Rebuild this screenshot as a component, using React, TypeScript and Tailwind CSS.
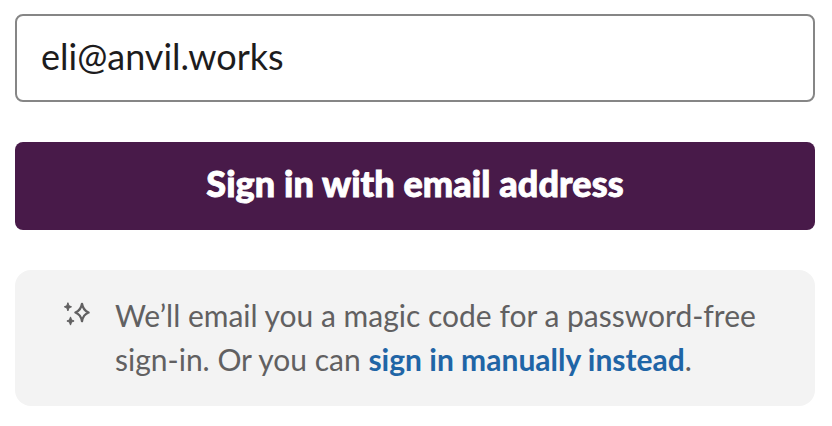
import { useState } from 'react';

function SparkleIcon() {
  return (
    <svg width="28" height="26" viewBox="0 0 28 26" fill="none" aria-hidden="true">
      <path
        d="M19 3.800C19.800 8.200 21.500 11 25.600 12.500C21.500 14 19.800 16.800 19 21.200C18.200 16.800 16.500 14 12.400 12.500C16.500 11 18.200 8.200 19 3.800Z"
        stroke="#616061"
        strokeWidth="2.3"
        strokeLinejoin="round"
      />
      <path d="M4.900 2.700L6 5.700L8.500 6.800L6 7.900L4.900 10.900L3.800 7.900L1.300 6.800L3.800 5.700Z" fill="#616061" stroke="#616061" strokeWidth="1" strokeLinejoin="round" />
      <path d="M7.500 16.900L8.600 19.900L11.100 21L8.600 22.100L7.500 25.100L6.400 22.100L3.900 21L6.400 19.900Z" fill="#616061" stroke="#616061" strokeWidth="1" strokeLinejoin="round" />
    </svg>
  );
}

export default function App() {
  const [email, setEmail] = useState('eli@anvil.works');

  return (
    <main className="h-[426px] w-[832px] bg-white px-[15px] pt-[14px] font-['Lato',sans-serif]">
      <form className="flex flex-col gap-10" onSubmit={(e) => e.preventDefault()}>
        <input
          type="email"
          value={email}
          onChange={(e) => setEmail(e.target.value)}
          className="h-[88px] w-[800px] rounded-lg border-2 border-[#868686] px-6 pb-1 text-[36px] text-[#1d1c1d] outline-none"
        />
        <button
          type="submit"
          className="h-[88px] w-[800px] rounded-lg bg-[#481a49] pb-1.5 text-[36px] font-black tracking-[0.1px] text-white [-webkit-text-stroke:0.9px_white]"
        >
          Sign in with email address
        </button>
        <div className="flex h-[136px] w-[800px] rounded-2xl bg-[#f3f3f3] pt-[23px] pl-[48px]">
          <div className="w-[52px] shrink-0 pt-[7px]">
            <SparkleIcon />
          </div>
          <p className="text-[30px] leading-[44px] whitespace-nowrap text-[#616061]">
            We’ll email you a magic code for a password-free
            <br />
            sign-in. Or you can{' '}
            <a href="#manual" className="font-bold text-[#1f65a6]">
              sign in manually instead
            </a>
            .
          </p>
        </div>
      </form>
    </main>
  );
}
